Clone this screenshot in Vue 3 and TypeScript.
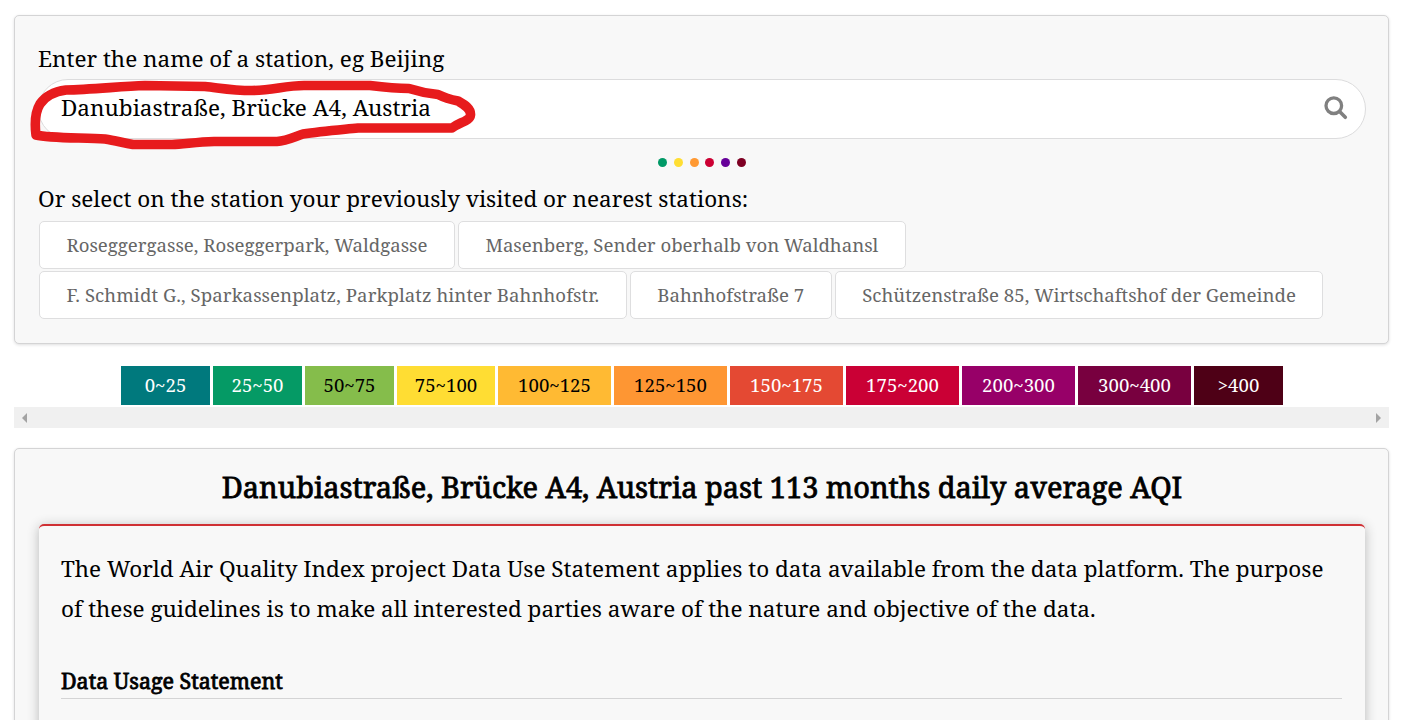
<script setup lang="ts">
interface Band {
  label: string
  bg: string
  fg: string
  width: number
}

const dots: string[] = ['#009966', '#ffde33', '#ff9933', '#cc0033', '#660099', '#7e0023']

const stationRows: string[][] = [
  ['Roseggergasse, Roseggerpark, Waldgasse', 'Masenberg, Sender oberhalb von Waldhansl'],
  [
    'F. Schmidt G., Sparkassenplatz, Parkplatz hinter Bahnhofstr.',
    'Bahnhofstraße 7',
    'Schützenstraße 85, Wirtschaftshof der Gemeinde',
  ],
]

const bands: Band[] = [
  { label: '0~25', bg: '#00797d', fg: '#fff', width: 89 },
  { label: '25~50', bg: '#059a65', fg: '#fff', width: 89 },
  { label: '50~75', bg: '#85bd4b', fg: '#000', width: 89 },
  { label: '75~100', bg: '#ffdd33', fg: '#000', width: 98 },
  { label: '100~125', bg: '#ffba33', fg: '#000', width: 113 },
  { label: '125~150', bg: '#fe9633', fg: '#000', width: 113 },
  { label: '150~175', bg: '#e44933', fg: '#fff', width: 113 },
  { label: '175~200', bg: '#ca0035', fg: '#fff', width: 113 },
  { label: '200~300', bg: '#970068', fg: '#fff', width: 113 },
  { label: '300~400', bg: '#78003f', fg: '#fff', width: 113 },
  { label: '>400', bg: '#4e0016', fg: '#fff', width: 89 },
]
</script>

<template>
  <main class="page">
    <section class="panel search-panel">
      <div class="label">Enter the name of a station, eg Beijing</div>
      <div class="search">
        <span class="query">Danubiastraße, Brücke A4, Austria</span>
        <svg class="magnifier" width="24" height="24" viewBox="0 0 24 24">
          <circle cx="9.8" cy="9.7" r="7.8" fill="none" stroke="#808080" stroke-width="3.3" />
          <path d="M15.6 15.6 L21.3 21.3" stroke="#808080" stroke-width="3.6" stroke-linecap="round" />
        </svg>
        <svg class="marker" width="450" height="76" viewBox="28 76 450 76">
          <path
            d="M36 135 C34.500 123 34.500 113 40 104 C46 95 55 91.500 66 90 C90 89.500 120 86.500 145 85.500 C165 86 185 86 205 86.500 C220 88 232 90.500 252 90.500 C272 90.500 285 85.500 304 85.500 H370 C382 87 394 88.500 409 88.500 C420 92 428 93.500 438 94.500 C446 98.500 453 100 458 101 C464 104.500 471 108 470.500 115 C470 121 460 122 452 128 H358 C338 130 320 131.500 303 134 C294 137 286 141 277 141.500 H214 C195 142 183 144.500 172 144.500 H133 C122 142.500 115 140.500 105 139 C84 137.500 50 138.500 36 135"
            fill="none"
            stroke="#e71b1d"
            stroke-width="9.600"
            stroke-linecap="round"
            stroke-linejoin="round"
          />
        </svg>
      </div>
      <div class="dots">
        <i v-for="c in dots" :key="c" :style="{ background: c }"></i>
      </div>
      <div class="label">Or select on the station your previously visited or nearest stations:</div>
      <div class="stations">
        <div v-for="(row, r) in stationRows" :key="r" class="row">
          <span v-for="name in row" :key="name" class="station">{{ name }}</span>
        </div>
      </div>
    </section>

    <div class="legend">
      <div
        v-for="b in bands"
        :key="b.label"
        class="band"
        :style="{ background: b.bg, color: b.fg, width: b.width + 'px' }"
      >
        {{ b.label }}
      </div>
    </div>
    <div class="scrollbar">
      <svg width="5" height="10" viewBox="0 0 5 10"><path d="M5 0 V10 L0 5 Z" fill="#a3a3a3" /></svg>
      <svg width="5" height="10" viewBox="0 0 5 10"><path d="M0 0 V10 L5 5 Z" fill="#a3a3a3" /></svg>
    </div>

    <section class="panel history-panel">
      <h2 class="title">Danubiastraße, Brücke A4, Austria past 113 months daily average AQI</h2>
      <div class="card">
        <p class="text">
          The World Air Quality Index project Data Use Statement applies to data available from the data platform. The
          purpose of these guidelines is to make all interested parties aware of the nature and objective of the data.
        </p>
        <h3 class="heading">Data Usage Statement</h3>
      </div>
    </section>
  </main>
</template>

<style>
body {
  margin: 0;
  background: #fff;
  overflow: hidden;
}
</style>

<style scoped>
.page {
  box-sizing: border-box;
  height: 720px;
  overflow: hidden;
  padding: 15px 25px 0 14px;
  font-family: 'Noto Serif', 'DejaVu Serif', serif;
  font-size: 22.5px;
  color: #000;
}
.panel {
  box-sizing: border-box;
  background: #f8f8f8;
  border: 1px solid #d4d4d5;
  border-radius: 5px;
  box-shadow: 0 1px 3px rgba(34, 36, 38, 0.15);
}
.search-panel {
  height: 329px;
  padding: 28px 22px 0 23px;
}
.label {
  height: 30px;
  line-height: 30px;
  white-space: nowrap;
}
.search {
  position: relative;
  box-sizing: border-box;
  display: flex;
  align-items: center;
  justify-content: space-between;
  height: 60px;
  margin-top: 5px;
  padding: 0 17px 2px 22px;
  background: #fff;
  border: 1px solid #dcdcdd;
  border-radius: 30px;
}
.query {
  padding-bottom: 2px;
}
.magnifier {
  display: block;
}
.marker {
  position: absolute;
  left: -11px;
  top: -4px;
}
.dots {
  display: flex;
  justify-content: center;
  gap: 6.800px;
  padding: 18.500px 0 17.500px;
}
.dots i {
  width: 9px;
  height: 9px;
  border-radius: 50%;
}
.stations {
  display: grid;
  gap: 2px;
  margin: 7px 0 0 1px;
}
.row {
  display: flex;
  gap: 3px;
}
.station {
  box-sizing: border-box;
  height: 48px;
  padding: 0 26.500px;
  line-height: 46px;
  font-size: 18.620px;
  white-space: nowrap;
  color: #666;
  background: #fff;
  border: 1px solid #dededf;
  border-radius: 5px;
}
.row:last-child .station:first-child {
  letter-spacing: 0.065px;
}
.legend {
  display: flex;
  gap: 3px;
  margin: 22px 0 2px 107px;
}
.band {
  height: 39px;
  line-height: 38px;
  text-align: center;
  font-size: 18.600px;
}
.scrollbar {
  display: flex;
  align-items: center;
  justify-content: space-between;
  height: 21px;
  padding: 0 8px;
  background: #f0f0f0;
}
.history-panel {
  height: 400px;
  margin-top: 20px;
  padding: 0 23px 0 24px;
}
.title,
.heading {
  font-weight: 400;
  -webkit-text-stroke: 0.8px #000;
  white-space: nowrap;
}
.title {
  margin: 0;
  padding-top: 18px;
  height: 57px;
  line-height: 40px;
  text-align: center;
  font-size: 28.950px;
}
.card {
  height: 360px;
  padding: 23px 23px 0 22px;
  border-top: 2px solid #cf3034;
  border-radius: 5px;
  box-shadow: 0 2px 12px rgba(34, 36, 38, 0.3);
}
.text {
  margin: 0;
  line-height: 40px;
}
.heading {
  margin: 36px 0 0;
  height: 33px;
  line-height: 32px;
  font-size: 21.440px;
  border-bottom: 1px solid #d4d4d5;
}
</style>
